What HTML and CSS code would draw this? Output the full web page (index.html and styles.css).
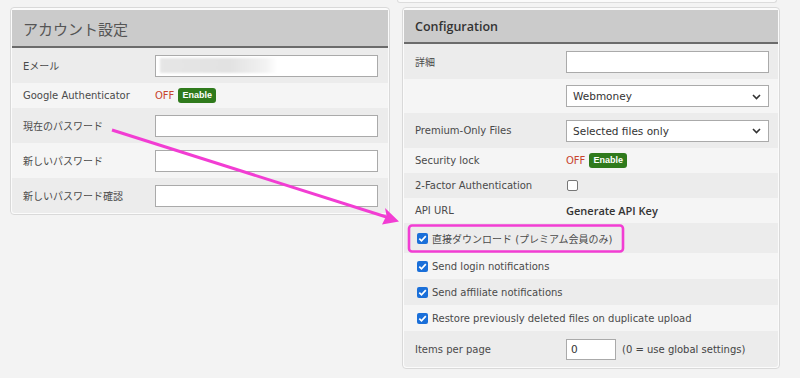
FILE: index.html
```html
<!DOCTYPE html>
<html lang="ja">
<head>
<meta charset="utf-8">
<link rel="stylesheet" href="styles.css">
</head>
<body>
<div class="page">
  <div class="col col-left">
    <div class="panel">
      <div class="head head-jp">アカウント設定</div>
      <div class="row row-in dark">
        <div class="lbl">Eメール</div>
        <div class="val"><div class="field"><span class="redact"></span></div></div>
      </div>
      <div class="row row-s light">
        <div class="lbl">Google Authenticator</div>
        <div class="val"><span class="off">OFF</span><span class="btn">Enable</span></div>
      </div>
      <div class="row row-in dark">
        <div class="lbl">現在のパスワード</div>
        <div class="val"><div class="field"></div></div>
      </div>
      <div class="row row-in light">
        <div class="lbl">新しいパスワード</div>
        <div class="val"><div class="field"></div></div>
      </div>
      <div class="row row-in dark row-last">
        <div class="lbl">新しいパスワード確認</div>
        <div class="val"><div class="field"></div></div>
      </div>
    </div>
  </div>
  <div class="col col-right">
    <div class="prev"></div>
    <div class="panel">
      <div class="head head-en">Configuration</div>
      <div class="row row-in dark r-wide">
        <div class="lbl">詳細</div>
        <div class="val"><div class="field"></div></div>
      </div>
      <div class="row row-sel light r-wide">
        <div class="lbl"></div>
        <div class="val"><div class="field sel"><span>Webmoney</span><svg class="chev" width="9" height="6" viewBox="0 0 9 6"><path d="M1 1 L4.5 4.5 L8 1" fill="none" stroke="#333" stroke-width="1.6"/></svg></div></div>
      </div>
      <div class="row row-in dark r-wide">
        <div class="lbl">Premium-Only Files</div>
        <div class="val"><div class="field sel"><span>Selected files only</span><svg class="chev" width="9" height="6" viewBox="0 0 9 6"><path d="M1 1 L4.5 4.5 L8 1" fill="none" stroke="#333" stroke-width="1.6"/></svg></div></div>
      </div>
      <div class="row row-s light r-wide">
        <div class="lbl">Security lock</div>
        <div class="val"><span class="off">OFF</span><span class="btn">Enable</span></div>
      </div>
      <div class="row row-s dark r-wide">
        <div class="lbl">2-Factor Authentication</div>
        <div class="val"><span class="cb"></span></div>
      </div>
      <div class="row row-s light r-wide">
        <div class="lbl">API URL</div>
        <div class="val"><span class="key">Generate API Key</span></div>
      </div>
      <div class="row row-cb row-jp dark">
        <span class="cb on"><svg width="11" height="11" viewBox="0 0 11 11"><path d="M2.3 5.6 L4.5 7.8 L8.8 3.2" fill="none" stroke="#fff" stroke-width="1.7"/></svg></span>
        <span class="cbl">直接ダウンロード (プレミアム会員のみ)</span>
      </div>
      <div class="row row-cb light">
        <span class="cb on"><svg width="11" height="11" viewBox="0 0 11 11"><path d="M2.3 5.6 L4.5 7.8 L8.8 3.2" fill="none" stroke="#fff" stroke-width="1.7"/></svg></span>
        <span class="cbl">Send login notifications</span>
      </div>
      <div class="row row-cb dark">
        <span class="cb on"><svg width="11" height="11" viewBox="0 0 11 11"><path d="M2.3 5.6 L4.5 7.8 L8.8 3.2" fill="none" stroke="#fff" stroke-width="1.7"/></svg></span>
        <span class="cbl">Send affiliate notifications</span>
      </div>
      <div class="row row-cb light">
        <span class="cb on"><svg width="11" height="11" viewBox="0 0 11 11"><path d="M2.3 5.6 L4.5 7.8 L8.8 3.2" fill="none" stroke="#fff" stroke-width="1.7"/></svg></span>
        <span class="cbl">Restore previously deleted files on duplicate upload</span>
      </div>
      <div class="row row-items dark r-wide row-last">
        <div class="lbl">Items per page</div>
        <div class="val"><div class="field small"><span>0</span></div><span class="hint">(0 = use global settings)</span></div>
      </div>
    </div>
  </div>
</div>
<svg class="annot" width="800" height="378" viewBox="0 0 800 378">
  <rect x="409" y="225.5" width="214" height="26" rx="3" fill="none" stroke="#f23dd3" stroke-width="2.6"/>
  <line x1="112" y1="130" x2="388" y2="217.5" stroke="#f23dd3" stroke-width="3"/>
  <path d="M399 221.5 L382 224.5 L386.5 215.5 L385 208 Z" fill="#f23dd3"/>
</svg>
</body>
</html>
```
FILE: styles.css
```css
* { box-sizing: border-box; }
html, body { margin: 0; padding: 0; }
body {
  background: #f3f3f3;
  font-family: "DejaVu Sans", "Noto Sans CJK JP", sans-serif;
  font-size: 10px;
  color: #4a4a4a;
  width: 800px;
  height: 378px;
  overflow: hidden;
  position: relative;
}
.page {
  display: flex;
  align-items: flex-start;
  padding: 7px 0 0 10px;
  gap: 12px;
}
.col-left { width: 380px; }
.col-right { width: 378px; margin-top: -7px; }
.prev {
  height: 3px;
  margin: 0 3px 4px -5px;
  border: 1px solid #dcdcdc;
  border-top: none;
  border-radius: 0 0 4px 4px;
  background: #fafafa;
}
.panel {
  border: 1px solid #d9d9d9;
  border-radius: 4px;
  background: #fbfbfb;
  padding: 2px 1px 1px 1px;
}
.head {
  background: #cbcbcb;
  border-bottom: 2px solid #6b6b6b;
  display: flex;
  align-items: center;
  padding-left: 11px;
}
.head-jp {
  height: 38px;
  font-family: "Noto Sans CJK JP", sans-serif;
  font-size: 15px;
  color: #555;
}
.head-en {
  height: 34px;
  font-family: "Open Sans", sans-serif;
  font-weight: 600;
  font-size: 12.5px;
  color: #333;
}
.row {
  display: grid;
  grid-template-columns: 143px 1fr;
  align-items: center;
  padding-right: 10px;
}
.r-wide { grid-template-columns: 162px 1fr; padding-right: 9px; }
.dark { background: #ececec; }
.light { background: #f5f5f5; }
.row-in { height: 35px; }
.row-sel { height: 34px; }
.row-s { height: 25px; }
.row-items { height: 36px; }
.row-last { border-radius: 0 0 3px 3px; }
.lbl { padding-left: 11px; white-space: nowrap; }
.val { display: flex; align-items: center; }
.field {
  flex: 1;
  height: 22px;
  background: #fff;
  border: 1px solid #aaa;
  display: flex;
  align-items: center;
  padding: 0 4px;
  color: #333;
  font-size: 10.5px;
}
.sel { justify-content: space-between; padding: 0 7px 0 6px; }
.sel .chev { margin-top: 1px; }
.small { flex: 0 0 50px; height: 21px; }
.hint { margin-left: 6px; color: #444; font-size: 10px; }
.redact {
  display: block;
  width: 117px;
  height: 15px;
  background: linear-gradient(90deg, #e6e6e6 0%, #e2e2e2 60%, #f2f2f2 90%, #fff 100%);
  filter: blur(1px);
}
.off { color: #c8452d; margin-right: 4px; }
.btn {
  display: inline-block;
  background: #2f7a1c;
  color: #fff;
  font-family: "Liberation Sans", sans-serif;
  font-weight: bold;
  font-size: 9px;
  line-height: 15px;
  height: 15px;
  padding: 0 4px;
  border-radius: 3px;
}
.cb {
  display: inline-block;
  width: 11px;
  height: 11px;
  border: 1px solid #777;
  border-radius: 2px;
  background: #fff;
  margin-left: 1px;
}
.cb.on { background: #1a6fd9; border: none; margin-left: 1px; }
.cb svg { display: block; }
.row-cb {
  display: flex;
  align-items: center;
  height: 26px;
  padding-left: 12px;
}
.row-jp { height: 30px; }
.cbl { margin-left: 4px; white-space: nowrap; }
.key {
  font-family: "Open Sans", sans-serif;
  font-weight: 600;
  font-size: 11px;
  color: #333;
}
.annot {
  position: absolute;
  left: 0;
  top: 0;
  pointer-events: none;
}
```
